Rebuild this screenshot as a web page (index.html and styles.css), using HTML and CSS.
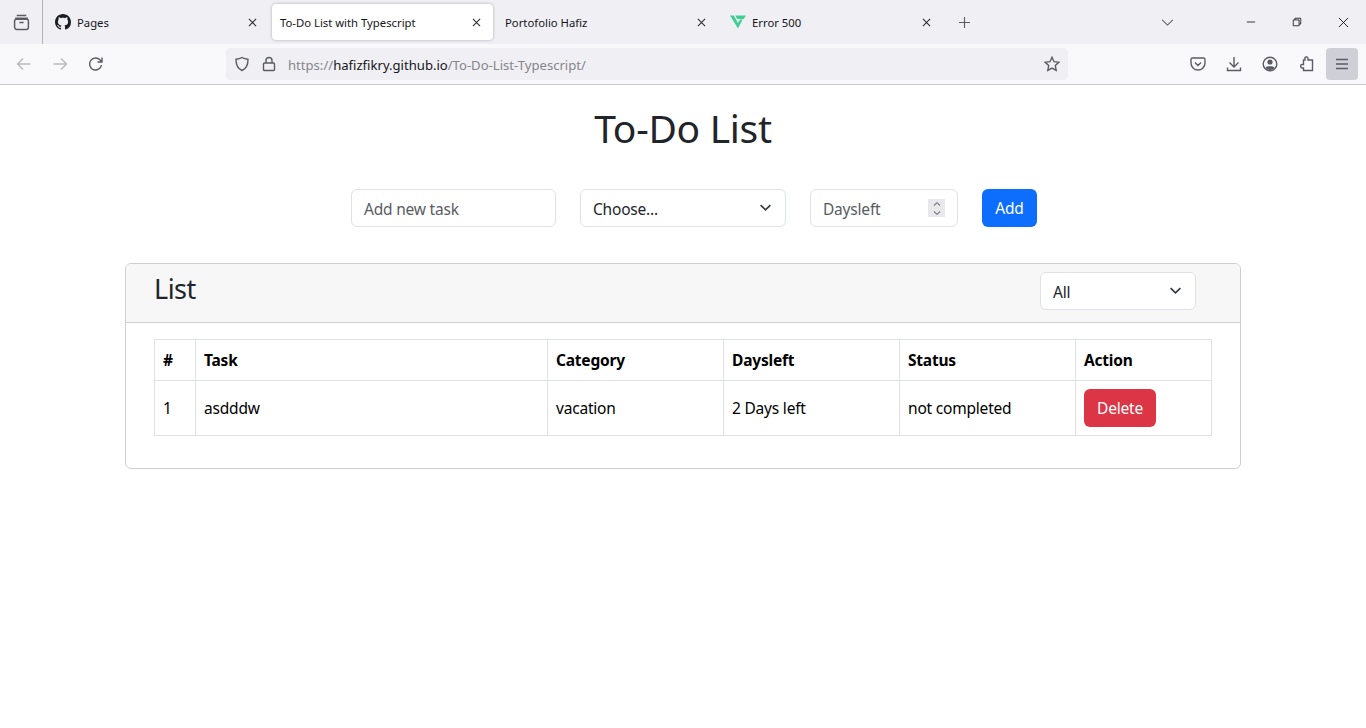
FILE: index.html
```html
<!DOCTYPE html>
<html lang="en">
<head>
<meta charset="utf-8">
<title>To-Do List with Typescript</title>
<link rel="stylesheet" href="styles.css">
</head>
<body>
<header class="chrome">
  <div class="tabstrip">
    <div class="tabs-menu">
      <svg class="ico" viewBox="0 0 16 16"><path d="M3.500 1.500h9M2 4h12M1.500 6.500a1.500 1.500 0 0 1 1.500-1.500h10a1.500 1.500 0 0 1 1.500 1.500v6a2 2 0 0 1-2 2h-9a2 2 0 0 1-2-2zM6 8h4"/></svg>
    </div>
    <div class="tab tab-first">
      <svg class="favicon" viewBox="0 0 16 16"><path fill="#1b1f23" stroke="none" d="M8 0C3.58 0 0 3.58 0 8c0 3.54 2.29 6.53 5.47 7.59.4.07.55-.17.55-.38 0-.19-.01-.82-.01-1.49-2.01.37-2.53-.49-2.69-.94-.09-.23-.48-.94-.82-1.13-.28-.15-.68-.52-.01-.53.63-.01 1.08.58 1.23.82.72 1.21 1.87.87 2.33.66.07-.52.28-.87.51-1.07-1.78-.2-3.64-.89-3.64-3.95 0-.87.31-1.59.82-2.15-.08-.2-.36-1.02.08-2.12 0 0 .67-.21 2.2.82.64-.18 1.32-.27 2-.27s1.36.09 2 .27c1.53-1.04 2.2-.82 2.2-.82.44 1.1.16 1.92.08 2.12.51.56.82 1.27.82 2.15 0 3.07-1.87 3.75-3.65 3.95.29.25.54.73.54 1.48 0 1.07-.01 1.93-.01 2.2 0 .21.15.46.55.38A8.01 8.01 0 0 0 16 8c0-4.42-3.58-8-8-8z"/></svg>
      <span class="tab-label">Pages</span>
      <svg class="close" viewBox="0 0 10 10"><path d="M1 1l8 8M9 1l-8 8"/></svg>
    </div>
    <div class="tab tab-active">
      <span class="tab-label">To-Do List with Typescript</span>
      <svg class="close" viewBox="0 0 10 10"><path d="M1 1l8 8M9 1l-8 8"/></svg>
    </div>
    <div class="tab tab-third">
      <span class="tab-label">Portofolio Hafiz</span>
      <svg class="close" viewBox="0 0 10 10"><path d="M1 1l8 8M9 1l-8 8"/></svg>
    </div>
    <div class="tab tab-fourth">
      <svg class="favicon" viewBox="0 0 16 16"><path class="fav-a" d="M0 1.500h3.800L8 9l2-3.500h2.600L8 14.500z"/><path class="fav-a" d="M5.200 1.500H16l-2.400 3.500H7.200z"/></svg>
      <span class="tab-label">Error 500</span>
      <svg class="close" viewBox="0 0 10 10"><path d="M1 1l8 8M9 1l-8 8"/></svg>
    </div>
    <svg class="newtab" viewBox="0 0 14 14"><path d="M7 1v12M1 7h12"/></svg>
    <svg class="tablist" viewBox="0 0 14 8"><path d="M1 1l6 6 6-6"/></svg>
    <div class="winctl">
      <svg class="winbtn" viewBox="0 0 12 12"><path d="M1 6h10"/></svg>
      <svg class="winbtn" viewBox="0 0 12 12"><path d="M1.500 3.500h7v7h-7zM3.500 3.500v-2h7v7h-2"/></svg>
      <svg class="winbtn" viewBox="0 0 12 12"><path d="M1 1l10 10M11 1L1 11"/></svg>
    </div>
  </div>
  <nav class="navbar">
    <svg class="ico ico-nav ico-dim" viewBox="0 0 16 16"><path d="M14.500 8h-13M7 2.500L1.500 8 7 13.500"/></svg>
    <svg class="ico ico-nav ico-dim" viewBox="0 0 16 16"><path d="M1.500 8h13M9 2.500L14.500 8 9 13.500"/></svg>
    <svg class="ico ico-nav" viewBox="0 0 16 16"><path d="M13.500 9a6 6 0 1 1-1.600-5.200L14 6M14 1.500V6H9.500"/></svg>
    <div class="urlbar">
      <svg class="ico ico-shield" viewBox="0 0 16 16"><path d="M8 1.500c2 1.200 4 1.600 6 1.800 0 5.500-1.500 9.500-6 11.200C3.500 12.800 2 8.800 2 3.300c2-.2 4-.6 6-1.800z"/></svg>
      <svg class="ico ico-lock" viewBox="0 0 16 16"><path d="M5 7V4.500a3 3 0 0 1 6 0V7M3.500 7h9a1 1 0 0 1 1 1v5.500a1 1 0 0 1-1 1h-9a1 1 0 0 1-1-1V8a1 1 0 0 1 1-1z"/></svg>
      <span class="url">https://<b class="url-host">hafizfikry.github.io</b>/To-Do-List-Typescript/</span>
      <svg class="ico ico-star" viewBox="0 0 16 16"><path d="M8 1.300l2 4.400 4.800.6-3.500 3.300.9 4.800L8 12.100l-4.200 2.300.9-4.800L1.200 6.300 6 5.700z"/></svg>
    </div>
    <div class="nav-tools">
      <svg class="ico ico-tool" viewBox="0 0 16 16"><path d="M2.500 2h11A1.500 1.500 0 0 1 15 3.500V7a7 7 0 0 1-14 0V3.500A1.500 1.500 0 0 1 2.500 2zM5 6.500l3 3 3-3"/></svg>
      <svg class="ico ico-tool" viewBox="0 0 16 16"><path d="M8 1v10M3.500 6.500L8 11l4.500-4.500M1.500 11.500v3h13v-3"/></svg>
      <svg class="ico ico-tool" viewBox="0 0 16 16"><circle cx="8" cy="8" r="6.800"/><circle class="solid" cx="8" cy="6" r="2.600"/><path class="solid" d="M3.500 11.500c1-1.800 8-1.800 9 0-1 1.800-3 2.500-4.500 2.500s-3.500-.7-4.500-2.500z"/></svg>
      <svg class="ico ico-tool" viewBox="0 0 16 16"><path d="M7 1.500a1.700 1.700 0 0 1 3 1V4h4.500v10.500h-9V12H4a1.800 1.800 0 0 1 0-3.500h1.500V4H7z"/></svg>
      <div class="menu-btn">
        <svg class="ico" viewBox="0 0 16 16"><path d="M2 3.500h12M2 8h12M2 12.500h12"/></svg>
      </div>
    </div>
  </nav>
</header>
<main class="page">
  <h1 class="title">To-Do List</h1>
  <form class="add-form">
    <input class="field field-task" type="text" placeholder="Add new task">
    <div class="select-wrap select-cat">
      <select class="field field-select"><option>Choose...</option></select>
      <svg class="chev" viewBox="0 0 16 16"><path d="M2 5l6 6 6-6"/></svg>
    </div>
    <div class="field field-days">
      <input class="days-input" type="text" placeholder="Daysleft">
      <span class="spinner">
        <svg viewBox="0 0 8 4"><path d="M1 3.500L4 .7l3 2.800"/></svg>
        <svg viewBox="0 0 8 4"><path d="M1 .5l3 2.800 3-2.800"/></svg>
      </span>
    </div>
    <button class="btn btn-add" type="button">Add</button>
  </form>
  <section class="card">
    <div class="card-head">
      <h2 class="card-title">List</h2>
      <div class="select-wrap select-filter">
        <select class="field field-select"><option>All</option></select>
        <svg class="chev" viewBox="0 0 16 16"><path d="M2 5l6 6 6-6"/></svg>
      </div>
    </div>
    <div class="card-body">
      <table class="todo">
        <colgroup>
          <col class="c-num"><col class="c-task"><col class="c-std"><col class="c-std"><col class="c-std"><col class="c-act">
        </colgroup>
        <thead>
          <tr><th>#</th><th>Task</th><th>Category</th><th>Daysleft</th><th>Status</th><th>Action</th></tr>
        </thead>
        <tbody>
          <tr><td>1</td><td>asdddw</td><td>vacation</td><td>2 Days left</td><td>not completed</td><td><button class="btn btn-del" type="button">Delete</button></td></tr>
        </tbody>
      </table>
    </div>
  </section>
</main>
</body>
</html>
```
FILE: styles.css
```css
* { box-sizing: border-box; }
html, body { margin: 0; padding: 0; height: 100%; }
body {
  background: #fff;
  color: #212529;
  font-family: "Noto Sans", "Open Sans", sans-serif;
  font-size: 15.5px;
  letter-spacing: -.2px;
  overflow: hidden;
}
svg { display: block; fill: none; stroke: currentColor; }

/* browser chrome */
.chrome { color: #5b5b66; letter-spacing: 0; }
.tabstrip {
  display: flex;
  align-items: center;
  height: 44px;
  background: #f0f0f4;
}
.tabs-menu {
  width: 43px;
  height: 44px;
  flex: none;
  display: flex;
  align-items: center;
  justify-content: center;
  border-right: 1px solid #b4b4b8;
}
.ico { width: 16px; height: 16px; stroke-width: 1.400; flex: none; }
.tabs-menu .ico { width: 17px; height: 17px; }
.tab {
  display: flex;
  align-items: center;
  flex: none;
  height: 36px;
  color: #15141a;
  font-size: 11.300px;
  gap: 6px;
}
.tab-first { width: 222px; margin-left: 1px; padding: 0 9px 0 11px; }
.tab-active {
  width: 221px;
  margin-left: 6px;
  padding: 0 12px 0 8px;
  background: #fff;
  border-radius: 4px;
  box-shadow: 0 0 3px rgba(0, 0, 0, .3);
}
.tab-third { width: 221px; margin-left: 4px; padding: 0 12px 0 8px; }
.tab-fourth { width: 221px; margin-left: 4px; padding: 0 12px 0 8px; }
.tab-label { flex: 1; white-space: nowrap; }
.favicon { width: 16px; height: 16px; flex: none; }
.fav-a { fill: #41cd94; stroke: none; }
.close { width: 9px; height: 9px; flex: none; color: #2c2c33; stroke-width: 1.200; }
.newtab { width: 13px; height: 13px; margin-left: 15px; flex: none; stroke-width: 1.200; }
.tablist { width: 13px; height: 7px; margin-left: 190px; flex: none; stroke-width: 1.200; }
.winctl { display: flex; margin-left: 72px; gap: 36px; color: #15141a; }
.winbtn { width: 10px; height: 10px; stroke-width: 1; }
.winctl .winbtn:last-child { width: 11px; height: 11px; }

.navbar {
  display: flex;
  align-items: center;
  height: 41px;
  padding: 0 8px 1px 16px;
  background: #f9f9fb;
  border-bottom: 1px solid #ccccd0;
}
.ico-nav { margin-right: 20px; }
.ico-dim { opacity: .4; }
.urlbar {
  display: flex;
  align-items: center;
  width: 842px;
  height: 32px;
  margin-left: 102px;
  padding: 0 8px;
  background: #f0f0f4;
  border-radius: 4px;
  font-size: 13.100px;
}
.ico-lock { margin-left: 11px; }
.url { margin-left: 11px; padding-top: 2px; flex: 1; color: #85858b; white-space: nowrap; }
.url-host { color: #15141a; font-weight: 400; }
.nav-tools { display: flex; align-items: center; margin-left: auto; gap: 20px; }
.menu-btn {
  width: 32px;
  height: 32px;
  margin-left: -8px;
  background: #cfcfd8;
  border-radius: 4px;
  display: flex;
  align-items: center;
  justify-content: center;
}
.ico-tool .solid { fill: currentColor; stroke: none; }

/* page */
.page { padding-top: 16px; }
.title {
  margin: 0;
  text-align: center;
  font-size: 39px;
  letter-spacing: -.3px;
  font-weight: 400;
  line-height: 54px;
}
.add-form {
  display: flex;
  justify-content: center;
  gap: 24px;
  margin-top: 34px;
  padding-left: 22px;
}
.field {
  height: 38px;
  border: 1px solid #dee2e6;
  border-radius: 6px;
  background: #fff;
  color: #212529;
  font: inherit;
  letter-spacing: inherit;
  outline: none;
}
.field-task { width: 205px; padding: 2px 12px 0; }
::placeholder { color: #595c5f; opacity: 1; }
.select-wrap { position: relative; }
.select-cat { width: 206px; }
.select-filter { width: 156px; }
.field-select {
  width: 100%;
  padding: 2px 12px 0;
  appearance: none;
  -webkit-appearance: none;
}
.chev {
  position: absolute;
  right: 14px;
  top: 12px;
  width: 13px;
  height: 13px;
  color: #343a40;
  stroke-width: 2;
  pointer-events: none;
}
.field-days {
  display: flex;
  align-items: center;
  width: 148px;
  padding: 0 12px;
}
.days-input {
  width: 100%;
  min-width: 0;
  border: 0;
  padding: 2px 0 0;
  font: inherit;
  letter-spacing: inherit;
  background: transparent;
  outline: none;
}
.spinner {
  display: flex;
  flex-direction: column;
  justify-content: center;
  gap: 5px;
  flex: none;
  width: 17px;
  height: 18px;
  background: #e9e9ed;
  color: #7a7a80;
}
.spinner svg { width: 8px; height: 4px; margin: 0 auto; stroke-width: 1.100; }
.btn {
  height: 38px;
  padding: 0 13px;
  border: 1px solid transparent;
  border-radius: 6px;
  color: #fff;
  font: inherit;
  letter-spacing: inherit;
}
.btn-add { width: 55px; padding: 0; background: #0d6efd; }
.btn-del { width: 72px; padding: 0; background: #dc3545; display: block; }

.card {
  width: 1116px;
  margin: 36px auto 0;
  border: 1px solid #cfcfd1;
  border-radius: 6px;
  overflow: hidden;
}
.card-head {
  display: flex;
  align-items: flex-start;
  justify-content: space-between;
  height: 59px;
  padding: 8px 44px 0 28px;
  background: #f7f7f7;
  border-bottom: 1px solid #cfcfd1;
}
.card-title { margin: 1px 0 0; font-size: 27px; letter-spacing: -.5px; font-weight: 400; line-height: 1.2; }
.card-body { padding: 16px 28px 32px; }
.todo {
  width: 1057px;
  table-layout: fixed;
  border-collapse: collapse;
  color: #000;
}
.c-num { width: 41px; }
.c-task { width: 352px; }
.c-std { width: 176px; }
.c-act { width: 136px; }
.todo th, .todo td {
  border: 1px solid #dee2e6;
  padding: 8px;
  text-align: left;
  vertical-align: middle;
}
.todo th { height: 41px; font-weight: 700; }
.todo td { height: 55px; }
```
